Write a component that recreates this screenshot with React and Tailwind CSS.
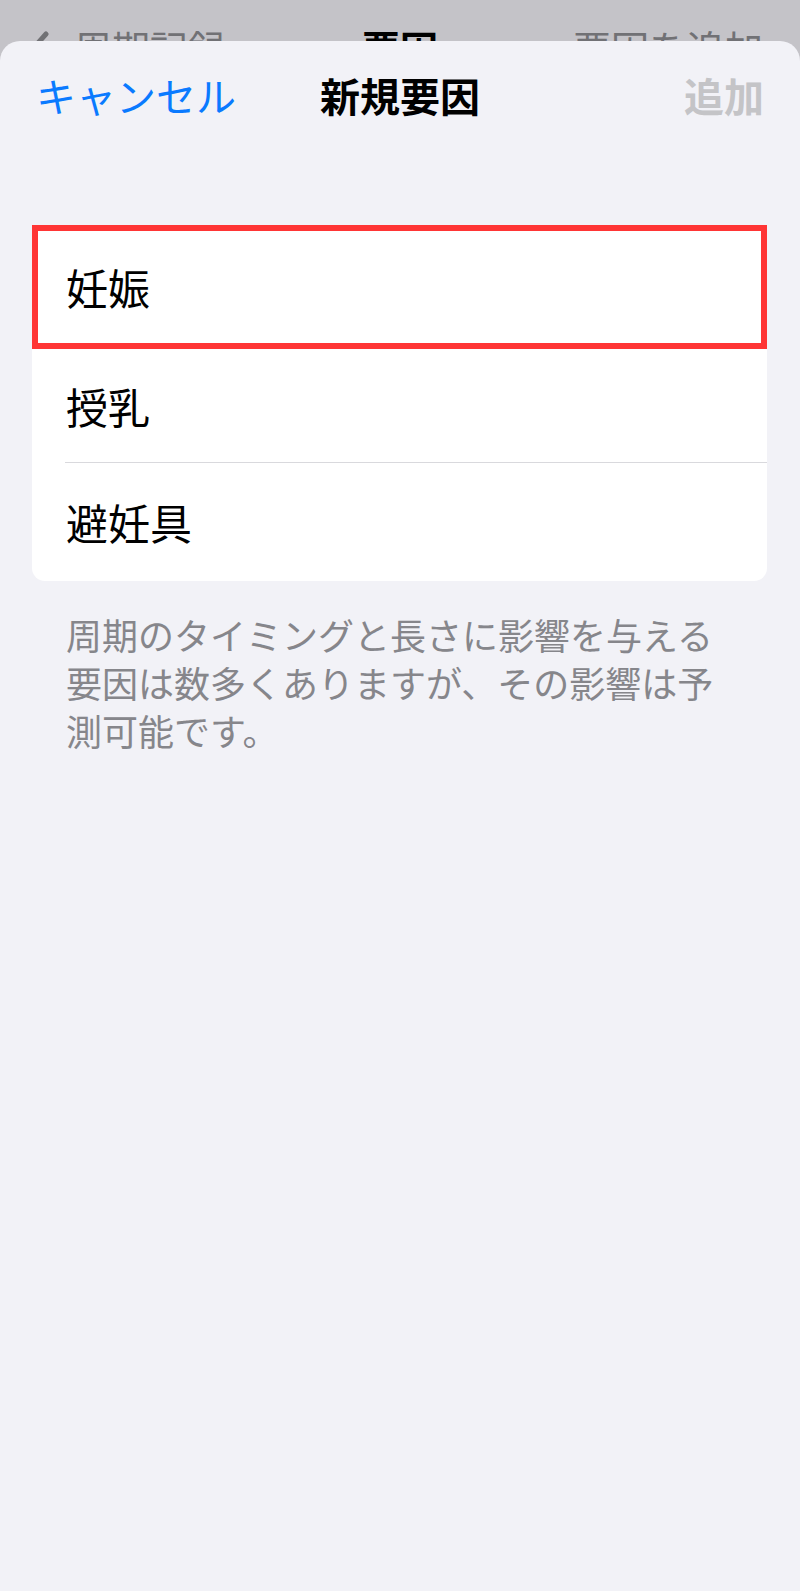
import React from "react";

const jp = { fontFamily: '"Noto Sans CJK JP", "Noto Sans", sans-serif' };

function BehindBar() {
  return (
    <div className="h-[41px] overflow-hidden bg-[#c4c3c8]">
      <div className="flex items-start pt-[28px] text-[38px] leading-none">
        <div className="flex items-start w-[260px] pl-[26px] text-[#717175]">
          <svg width="26" height="44" viewBox="0 0 26 44" className="mt-[2px]">
            <polyline points="20,4 4,22 20,40" fill="none" stroke="#717175" strokeWidth="5" strokeLinecap="round" strokeLinejoin="round" />
          </svg>
          <span className="ml-[22px]">周期記録</span>
        </div>
        <div className="flex-1 text-center font-bold text-black">要因</div>
        <div className="w-[260px] text-right pr-[37px] text-[#717175]">要因を追加</div>
      </div>
    </div>
  );
}

function Row({ label, highlight }) {
  return (
    <div
      className={
        highlight
          ? "h-[124px] flex items-center pl-[28px] border-[6px] border-[#ff3535]"
          : "h-[113px] flex items-center pl-[34px]"
      }
    >
      <span className="text-[42px] leading-none text-black">{label}</span>
    </div>
  );
}

export default function App() {
  return (
    <div className="min-h-[1591px] bg-[#c4c3c8]" style={jp}>
      <BehindBar />
      <div className="min-h-[1550px] bg-[#f2f2f7] rounded-t-[20px]">
        <div className="h-[108px] grid grid-cols-[1fr_auto_1fr] items-center px-[36px] text-[40px] leading-none">
          <button className="justify-self-start text-[#0a7aff]">キャンセル</button>
          <div className="font-bold text-black">新規要因</div>
          <button className="justify-self-end font-semibold text-[#c4c4c7]">追加</button>
        </div>
        <div className="pt-[76px] px-[32px]">
          <div className="bg-white rounded-[13px] w-[735px]">
            <Row label="妊娠" highlight />
            <Row label="授乳" />
            <div className="ml-[33px] h-px bg-[#d9d9dd]"></div>
            <div className="h-[118px] flex items-center pl-[34px]">
              <span className="text-[42px] leading-none text-black">避妊具</span>
            </div>
          </div>
        </div>
        <p className="mt-[29px] px-[66px] text-[36px] leading-[48px] text-[#86868b]">
          周期のタイミングと長さに影響を与える要因は数多くありますが、その影響は予測可能です。
        </p>
      </div>
    </div>
  );
}
